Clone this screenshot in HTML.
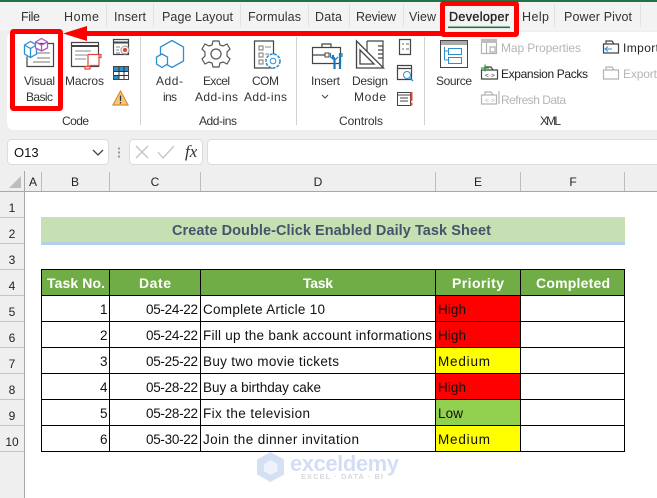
<!DOCTYPE html>
<html><head><meta charset="utf-8"><style>
html,body{margin:0;padding:0;background:#fff}
svg{display:block}
text{font-family:"Liberation Sans",sans-serif;fill:#222}
.r{font-size:12px;fill:#333}
.t{font-size:12.5px;fill:#333}
.c{font-size:13.5px;fill:#111}
.h{font-size:14px;font-weight:bold;fill:#fff}
.g{font-size:12px;fill:#b5b5b5}
.hd{font-size:12px;fill:#222}
.gy{fill:none;stroke:#b3b3b3;stroke-width:1.2}
.k{fill:none;stroke:#444;stroke-width:1.2}
.b{fill:none;stroke:#2d8fd0;stroke-width:1.2}
</style></head><body>
<svg width="657" height="498" viewBox="0 0 657 498" xmlns="http://www.w3.org/2000/svg">
<rect width="657" height="498" fill="#fff"/>
<rect width="657" height="171" fill="#efefef"/>
<rect width="657" height="2" fill="#217346"/>
<rect y="2" width="657" height="29" fill="#f3f3f3"/>
<path d="M657 32H14a7 7 0 0 0-7 7v84a7 7 0 0 0 7 7h643z" fill="#fff"/>
<path d="M106.500 4v23M153.500 4v23M240.500 4v23M308.500 4v23M349.500 4v23M403.500 4v23M554.500 4v23M640.500 4v23" stroke="#e2e2e2"/>

<text class="t" x="21" y="21" textLength="19">File</text>
<text class="t" x="64" y="21" textLength="35">Home</text>
<text class="t" x="114" y="21" textLength="32">Insert</text>
<text class="t" x="162" y="21" textLength="71">Page Layout</text>
<text class="t" x="248" y="21" textLength="53">Formulas</text>
<text class="t" x="315" y="21" textLength="27">Data</text>
<text class="t" x="356" y="21" textLength="40">Review</text>
<text class="t" x="409" y="21" textLength="27">View</text>
<text x="449" y="21" textLength="60" style="font-size:12.5px;fill:#222;stroke:#222;stroke-width:.35">Developer</text>
<rect x="448" y="26.500" width="62" height="1.600" fill="#217346"/>
<text class="t" x="522" y="21" textLength="27">Help</text>
<text class="t" x="564" y="21" textLength="68">Power Pivot</text>

<!-- group separators -->
<path d="M140.500 37v88M296.500 37v88M424.500 37v88" stroke="#d0d0d0"/>

<!-- Visual Basic icon -->
<path d="M36 43.500h17.500v23H27v-10" class="k"/>
<path d="M34 53h16M37 58h13M33 62h17" stroke="#777"/>
<path d="M24.500 45l6-3.500 6 3.500v9l-6 3.500-6-3.500zM24.500 45l6 3.500 6-3.500M30.500 48.500v9" fill="#fff" stroke="#2d8fd0" stroke-width="1.300"/>
<path d="M35.500 42l6-3.500 6 3.500v6l-6 3-6-3zM35.500 42l6 3 6-3M41.500 45v6" fill="#fff" stroke="#a55cc0" stroke-width="1.300"/>
<text class="r" x="24" y="85" textLength="31">Visual</text>
<text class="r" x="26" y="101" textLength="27">Basic</text>

<!-- Macros icon -->
<path d="M71.500 42.500h27v24h-27z" class="k"/>
<path d="M71 46h28" stroke="#444" stroke-width="2"/>
<path d="M75 51h16M75 55h13M75 59h11" stroke="#888"/>
<path d="M88 54.500h11v11h-9v3.500h-5v-2.500h4.500M88 54.500v12M99 54.500h2v3h-2" fill="#fff" stroke="#e0483e" stroke-width="1.200"/>
<text class="r" x="65" y="85" textLength="39">Macros</text>

<!-- small code icons -->
<path d="M113.500 39.500h15v15h-15z" class="k"/><path d="M113 42.500h16" stroke="#444" stroke-width="2"/>
<circle cx="125" cy="50" r="4" fill="#fff" stroke="#999"/><circle cx="125" cy="50" r="2.200" fill="#e0483e"/>
<path d="M116 47h4M116 50h3M116 53h4" stroke="#888"/>
<rect x="113.500" y="66.500" width="15" height="13" fill="#fff" stroke="#444"/>
<path d="M114 67h14v4h-14z" fill="#2d8fd0"/><path d="M114 75h5v4h-5z" fill="#2d8fd0"/>
<path d="M119 67v12M124 67v12M114 71.500h14M114 75.500h14" stroke="#333"/>
<path d="M120.500 91l7.500 14h-15z" fill="#fbc77a" stroke="#d88a30" stroke-width="1.200"/>
<path d="M120.500 95.500v5.500M120.500 102v1.500" stroke="#333" stroke-width="1.300"/>

<!-- Add-ins icon -->
<path d="M172 40.500l11.500 6.500v14l-11.500 6.500-11.500-6.500v-14z" fill="none" stroke="#2d8fd0" stroke-width="1.300"/>
<path d="M162 54l5.500 3v7l-5.500 3.500-5.500-3.500v-7z" fill="#fff" stroke="#2d8fd0" stroke-width="1.300"/>
<text class="r" x="156" y="85" textLength="27">Add-</text>
<text class="r" x="163" y="101" textLength="14">ins</text>

<!-- Excel add-ins gear -->
<g fill="none" stroke="#555" stroke-width="1.200">
<circle cx="216" cy="54" r="5"/>
<path d="M213 41h6l1 4 3 1 4-2 3 5-3 3v4l3 3-3 5-4-2-3 1-1 4h-6l-1-4-3-1-4 2-3-5 3-3v-4l-3-3 3-5 4 2 3-1z"/>
</g>
<text class="r" x="203" y="85" textLength="27">Excel</text>
<text class="r" x="195" y="101" textLength="43">Add-ins</text>

<!-- COM add-ins -->
<path d="M254.500 41h19v27h-19z" class="k"/>
<path d="M259 46h4v4h-4zM259 53h4v4h-4zM259 60h4v4h-4z" fill="none" stroke="#777"/>
<path d="M265 47h6M265 54h4" stroke="#888"/>
<circle cx="273" cy="61" r="7" fill="#fff" stroke="#2d8fd0" stroke-width="1.600" stroke-dasharray="3 1.200"/>
<circle cx="273" cy="61" r="2.800" fill="none" stroke="#2d8fd0"/>
<text class="r" x="252" y="85" textLength="27">COM</text>
<text class="r" x="244" y="101" textLength="43">Add-ins</text>

<!-- Insert toolbox -->
<path d="M312.500 47.500h28v16h-28zM312.500 55h16M322 47v-3h9v3" class="k"/>
<rect x="325" y="53" width="4" height="4" fill="#fff" stroke="#444"/>
<path d="M333 55v2l1.500 2v10M340 53v16" fill="none" stroke="#1f77b4" stroke-width="2.200"/>
<path d="M330.500 53v4l2.500 2h3l2-2M342 53v4" fill="none" stroke="#1f77b4" stroke-width="1.200"/>
<text class="r" x="311" y="85" textLength="29">Insert</text>
<path d="M322 95l3 3 3-3" fill="none" stroke="#444"/>

<!-- Design mode -->
<path d="M356.500 41v27h27z M360 50v14h14z" fill="none" stroke="#444" stroke-width="1.300"/>
<path d="M367 41h16v26M367 41v11M378 46h5M378 50h5M378 54h5M378 58h5" fill="none" stroke="#444" stroke-width="1.200"/>
<text class="r" x="352" y="85" textLength="36">Design</text>
<text class="r" x="354" y="101" textLength="32">Mode</text>

<!-- small controls icons -->
<path d="M399.500 39.500h11v15h-11z" class="k"/>
<path d="M402 44h2M402 49h2M406 44h3M406 49h3" stroke="#666"/>
<path d="M397.500 65.500h14v14h-14zM397.500 68.500h14" class="k"/>
<circle cx="407" cy="75" r="3.500" fill="#fff" stroke="#2d8fd0"/><path d="M410 78l3 3" stroke="#2d8fd0" stroke-width="1.300"/>
<path d="M397.500 92.500h13v13h-13zM397.500 95h13M400 98h8M400 101h8" class="k" style="stroke-width:1"/>
<path d="M411.500 92v9M411.500 102.500v3" stroke="#e0483e" stroke-width="2"/>

<!-- Source -->
<rect x="440.500" y="40.500" width="27" height="27" fill="#fff" stroke="#444"/>
<rect x="441" y="41" width="26" height="4" fill="#aaa"/>
<path d="M444.500 47v13M444.500 51h4M444.500 60h4" fill="none" stroke="#2d8fd0"/>
<rect x="448.500" y="48.500" width="13" height="6" fill="#fff" stroke="#2d8fd0"/>
<rect x="448.500" y="57.500" width="13" height="6" fill="#fff" stroke="#2d8fd0"/>
<text class="r" x="436" y="85" textLength="36">Source</text>

<!-- XML small -->
<path d="M481.500 39.500h15v14h-15zM486.500 43v11M490 47h5v5h-5z" class="gy"/>
<rect x="481" y="39" width="16" height="4" fill="#bdbdbd"/>
<text class="g" x="501" y="52" textLength="80">Map Properties</text>
<path d="M481.500 70h16v9h-16zM485 70v-3h6l2 3" class="k"/>
<text x="485" y="77.500" style="font-size:6.500px;fill:#333">&lt;&#183;&gt;</text>
<path d="M481 68h8M485 64.500v7" stroke="#2e9e3f" stroke-width="1.200"/>
<text class="r" x="501" y="78" textLength="87" style="fill:#222">Expansion Packs</text>
<path d="M481.500 95h15v9h-15zM485 95v-3h6l2 3M499 91v13" class="gy"/>
<text x="485" y="102.500" style="font-size:6.500px;fill:#aaa">&lt;&#183;&gt;</text>
<text class="g" x="501" y="104" textLength="65">Refresh Data</text>
<path d="M603.500 44h15v9h-15zM606 44v-3h6l2 3" class="k"/>
<path d="M612 49h-7M608 46.500l-3 2.500 3 2.500" fill="none" stroke="#2d8fd0"/>
<text class="r" x="623" y="52" textLength="36" style="fill:#222">Import</text>
<path d="M603.500 70h15v9h-15zM606 70v-3h6l2 3" class="gy"/>
<text class="g" x="623" y="78" textLength="34">Export</text>

<!-- group labels -->
<text class="r" x="62" y="125" textLength="27">Code</text>
<text class="r" x="199" y="125" textLength="38">Add-ins</text>
<text class="r" x="339" y="125" textLength="44">Controls</text>
<text class="r" x="540" y="125" textLength="21">XML</text>

<!-- red annotations -->
<rect x="12.500" y="31.500" width="48" height="77" rx="1" fill="none" stroke="#f00" stroke-width="5" stroke-linejoin="round"/>
<rect x="442.500" y="3.500" width="74" height="31" rx="1" fill="none" stroke="#f00" stroke-width="5" stroke-linejoin="round"/>
<path d="M86 31H443v5H86z" fill="#f00"/>
<path d="M63 33.500L87 26v15z" fill="#f00"/>

<!-- formula bar -->
<rect x="7.500" y="139.500" width="101" height="25" rx="4" fill="#fff" stroke="#dcdcdc"/>
<text x="14" y="157" style="font-size:13px;fill:#111">O13</text>
<path d="M93 150l5 5 5-5" fill="none" stroke="#444" stroke-width="1.300"/>
<path d="M119 147.500v2M119 151.500v2M119 155.500v2" stroke="#999" stroke-width="2"/>
<rect x="129.500" y="139.500" width="73" height="25" rx="4" fill="#fff" stroke="#dcdcdc"/>
<path d="M136 146l12 12M148 146l-12 12M158 152l5 6 11-12" fill="none" stroke="#c4c4c4" stroke-width="1.300"/>
<text x="185" y="157" style="font-family:'Liberation Serif',serif;font-style:italic;font-size:17px;fill:#333">fx</text>
<rect x="207.500" y="139.500" width="460" height="25" rx="4" fill="#fff" stroke="#dcdcdc"/>

<!-- sheet headers -->
<rect y="171" width="657" height="20" fill="#efefef"/>
<rect y="191" width="24" height="307" fill="#efefef"/>
<path d="M0 191.500H657" stroke="#a8a8a8"/>
<path d="M24.500 171V498" stroke="#a8a8a8"/>
<path d="M9 188l12-12v12z" fill="#bdbdbd"/>
<path d="M41.500 172v19M109.500 172v19M200.500 172v19M435.500 172v19M520.500 172v19M624.500 172v19" stroke="#bdbdbd"/>
<path d="M0 217.500h24M0 243.500h24M0 269.500h24M0 295.500h24M0 321.500h24M0 347.500h24M0 373.500h24M0 399.500h24M0 425.500h24M0 451.500h24" stroke="#c4c4c4"/>
<g class="hd" text-anchor="middle">
<text class="hd" x="33" y="186">A</text><text class="hd" x="75" y="186">B</text><text class="hd" x="155" y="186">C</text><text class="hd" x="318" y="186">D</text><text class="hd" x="478" y="186">E</text><text class="hd" x="573" y="186">F</text>
<text class="hd" x="12" y="212">1</text><text class="hd" x="12" y="238">2</text><text class="hd" x="12" y="264">3</text><text class="hd" x="12" y="290">4</text><text class="hd" x="12" y="316">5</text><text class="hd" x="12" y="342">6</text><text class="hd" x="12" y="368">7</text><text class="hd" x="12" y="394">8</text><text class="hd" x="12" y="420">9</text><text class="hd" x="12" y="446">10</text>
</g>

<!-- title band -->
<rect x="41" y="217" width="584" height="25" fill="#c6e0b4"/>
<rect x="41" y="242" width="584" height="3" fill="#b4cfe8"/>
<text x="172" y="235" textLength="319" style="font-size:14.500px;font-weight:bold;fill:#44546a">Create Double-Click Enabled Daily Task Sheet</text>

<!-- table -->
<rect x="41" y="269" width="583" height="26" fill="#70ad47"/>
<rect x="436" y="296" width="84" height="25" fill="#f00"/>
<rect x="436" y="322" width="84" height="25" fill="#f00"/>
<rect x="436" y="348" width="84" height="25" fill="#ff0"/>
<rect x="436" y="374" width="84" height="25" fill="#f00"/>
<rect x="436" y="400" width="84" height="25" fill="#92d050"/>
<rect x="436" y="426" width="84" height="25" fill="#ff0"/>
<path d="M41 269.500H625M41 295.500H625M41 321.500H625M41 347.500H625M41 373.500H625M41 399.500H625M41 425.500H625M41 451.500H625M41.500 269V452M109.500 269V452M200.500 269V452M435.500 269V452M520.500 269V452M624.500 269V452" stroke="#000"/>

<text class="h" x="47" y="288" textLength="58">Task No.</text>
<text class="h" x="139" y="288" textLength="32">Date</text>
<text class="h" x="303" y="288" textLength="30">Task</text>
<text class="h" x="452" y="288" textLength="52">Priority</text>
<text class="h" x="536" y="288" textLength="74">Completed</text>

<g class="c">
<text class="c" x="100" y="314">1</text><text class="c" x="100" y="340">2</text><text class="c" x="100" y="366">3</text><text class="c" x="100" y="392">4</text><text class="c" x="100" y="418">5</text><text class="c" x="100" y="444">6</text>
<text class="c" x="146" y="314" textLength="52">05-24-22</text>
<text class="c" x="146" y="340" textLength="52">05-24-22</text>
<text class="c" x="146" y="366" textLength="52">05-25-22</text>
<text class="c" x="146" y="392" textLength="52">05-28-22</text>
<text class="c" x="146" y="418" textLength="52">05-28-22</text>
<text class="c" x="146" y="444" textLength="52">05-30-22</text>
<text class="c" x="203" y="314" textLength="122">Complete Article 10</text>
<text class="c" x="203" y="340" textLength="229">Fill up the bank account informations</text>
<text class="c" x="203" y="366" textLength="136">Buy two movie tickets</text>
<text class="c" x="203" y="392" textLength="118">Buy a birthday cake</text>
<text class="c" x="203" y="418" textLength="107">Fix the television</text>
<text class="c" x="203" y="444" textLength="156">Join the dinner invitation</text>
<text class="c" x="438" y="314" textLength="28">High</text>
<text class="c" x="438" y="340" textLength="28">High</text>
<text class="c" x="438" y="366" textLength="52">Medium</text>
<text class="c" x="438" y="392" textLength="28">High</text>
<text class="c" x="438" y="418" textLength="25">Low</text>
<text class="c" x="438" y="444" textLength="52">Medium</text>
</g>

<!-- watermark -->
<path d="M270.500 452l13.500 7.500v15l-13.500 7.500-13.500-7.500v-15z" fill="#d6e0f5"/>
<path d="M270.500 460l7 4v7l-7 4-6.500-4v-7z" fill="#eef2fb"/>
<text x="290" y="471" textLength="109" style="font-size:22px;font-weight:bold;fill:#d3def6">exceldemy</text>
<text x="301" y="479" textLength="82" style="font-size:7.500px;font-weight:bold;fill:#d8d8d8">EXCEL &#183; DATA &#183; BI</text>
</svg>
</body></html>
